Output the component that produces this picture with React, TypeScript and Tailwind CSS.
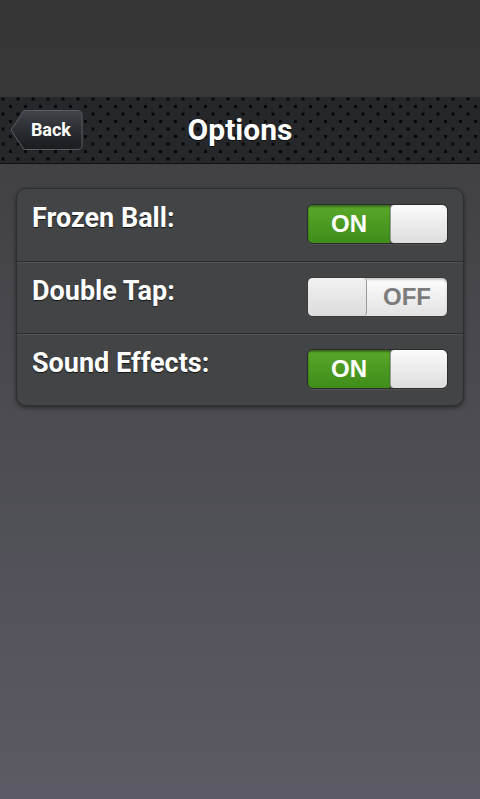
import React from "react"

const font = { fontFamily: "Roboto, 'Liberation Sans', sans-serif" }

function Toggle({ on }: { on: boolean }) {
  if (on) {
    return (
      <div className="flex h-[40px] w-[141px] overflow-hidden rounded-[6px] border border-[#2a2d2a] shadow-[0_1px_0_rgba(255,255,255,0.08)]">
        <div className="flex w-[82px] items-center justify-center bg-gradient-to-b from-[#5aa82b] via-[#4c9a21] to-[#3f8e1a] shadow-[inset_0_2px_2px_rgba(0,0,0,0.35)]">
          <span className="font-['Liberation_Sans',Arial,sans-serif] text-[24px] font-bold leading-none text-white">ON</span>
        </div>
        <div className="flex-1 rounded-[4px] border-l border-[#9a9a9a] bg-gradient-to-b from-[#fafafa] to-[#dedede]" />
      </div>
    )
  }
  return (
    <div className="flex h-[40px] w-[141px] overflow-hidden rounded-[6px] border border-[#3a3a3a] bg-gradient-to-b from-[#fdfdfd] to-[#e2e2e2] shadow-[inset_0_2px_2px_rgba(0,0,0,0.2)]">
      <div className="w-[59px] rounded-[4px] border-r border-[#9a9a9a] bg-gradient-to-b from-[#f2f2f2] to-[#dcdcdc]" />
      <div className="flex flex-1 items-center justify-center">
        <span className="font-['Liberation_Sans',Arial,sans-serif] text-[24px] font-bold leading-none text-[#7c7c7c]">OFF</span>
      </div>
    </div>
  )
}

const rows = [
  { label: "Frozen Ball:", on: true },
  { label: "Double Tap:", on: false },
  { label: "Sound Effects:", on: true },
]

export default function App() {
  return (
    <div style={font} className="flex h-[799px] w-[480px] flex-col overflow-hidden bg-gradient-to-b from-[#3a3b3d] to-[#5c5b65]">
      <div className="h-[97px] bg-gradient-to-b from-[#363636] to-[#383838]" />

      <div className="flex h-[67px] items-center border-b border-[#111] bg-[#26272a] bg-[radial-gradient(circle,#080808_1.4px,transparent_2px),radial-gradient(circle,#080808_1.4px,transparent_2px)] bg-[length:15px_15px] bg-[position:3px_2px,10.5px_9.5px] px-[10px]">
        <div className="relative flex h-[42px] w-[73px] items-center justify-end pr-[12px]">
          <svg className="absolute inset-0" width="73" height="42" viewBox="0 0 73 42">
            <defs>
              <linearGradient id="bk" x1="0" y1="0" x2="0" y2="1">
                <stop offset="0" stopColor="#41454b" />
                <stop offset="0.5" stopColor="#2a2d31" />
                <stop offset="1" stopColor="#1a1c1f" />
              </linearGradient>
            </defs>
            <path d="M1 21 L14 1.5 L67 1.5 Q72 1.5 72 6.5 L72 35.5 Q72 40.5 67 40.5 L14 40.5 Z" fill="url(#bk)" stroke="#5a5e63" strokeWidth="1" />
          </svg>
          <span className="relative text-[18px] font-bold leading-none text-white">Back</span>
        </div>
        <div className="flex-1 pr-[73px] text-center text-[30px] font-bold leading-none text-white [text-shadow:0_1px_1px_rgba(0,0,0,0.6)]">Options</div>
      </div>

      <div className="px-[16px] pt-[24px]">
        <div className="overflow-hidden rounded-[10px] border border-[#2e2f31] bg-[#434446] shadow-[0_2px_4px_rgba(0,0,0,0.45)]">
          {rows.map((r, i) => (
            <div
              key={r.label}
              className={
                i === 0
                  ? "flex h-[72px] items-start justify-between pl-[15px] pr-[15px] pt-[15px]"
                  : "flex h-[72px] items-start justify-between border-t border-t-[#2c2d2f] pl-[15px] pr-[15px] pt-[15px] shadow-[inset_0_1px_0_#505153]"
              }
            >
              <span className="pt-[1px] text-[27px] font-bold leading-[26px] text-white [text-shadow:0_1px_1px_rgba(0,0,0,0.7)]">{r.label}</span>
              <Toggle on={r.on} />
            </div>
          ))}
        </div>
      </div>
    </div>
  )
}
